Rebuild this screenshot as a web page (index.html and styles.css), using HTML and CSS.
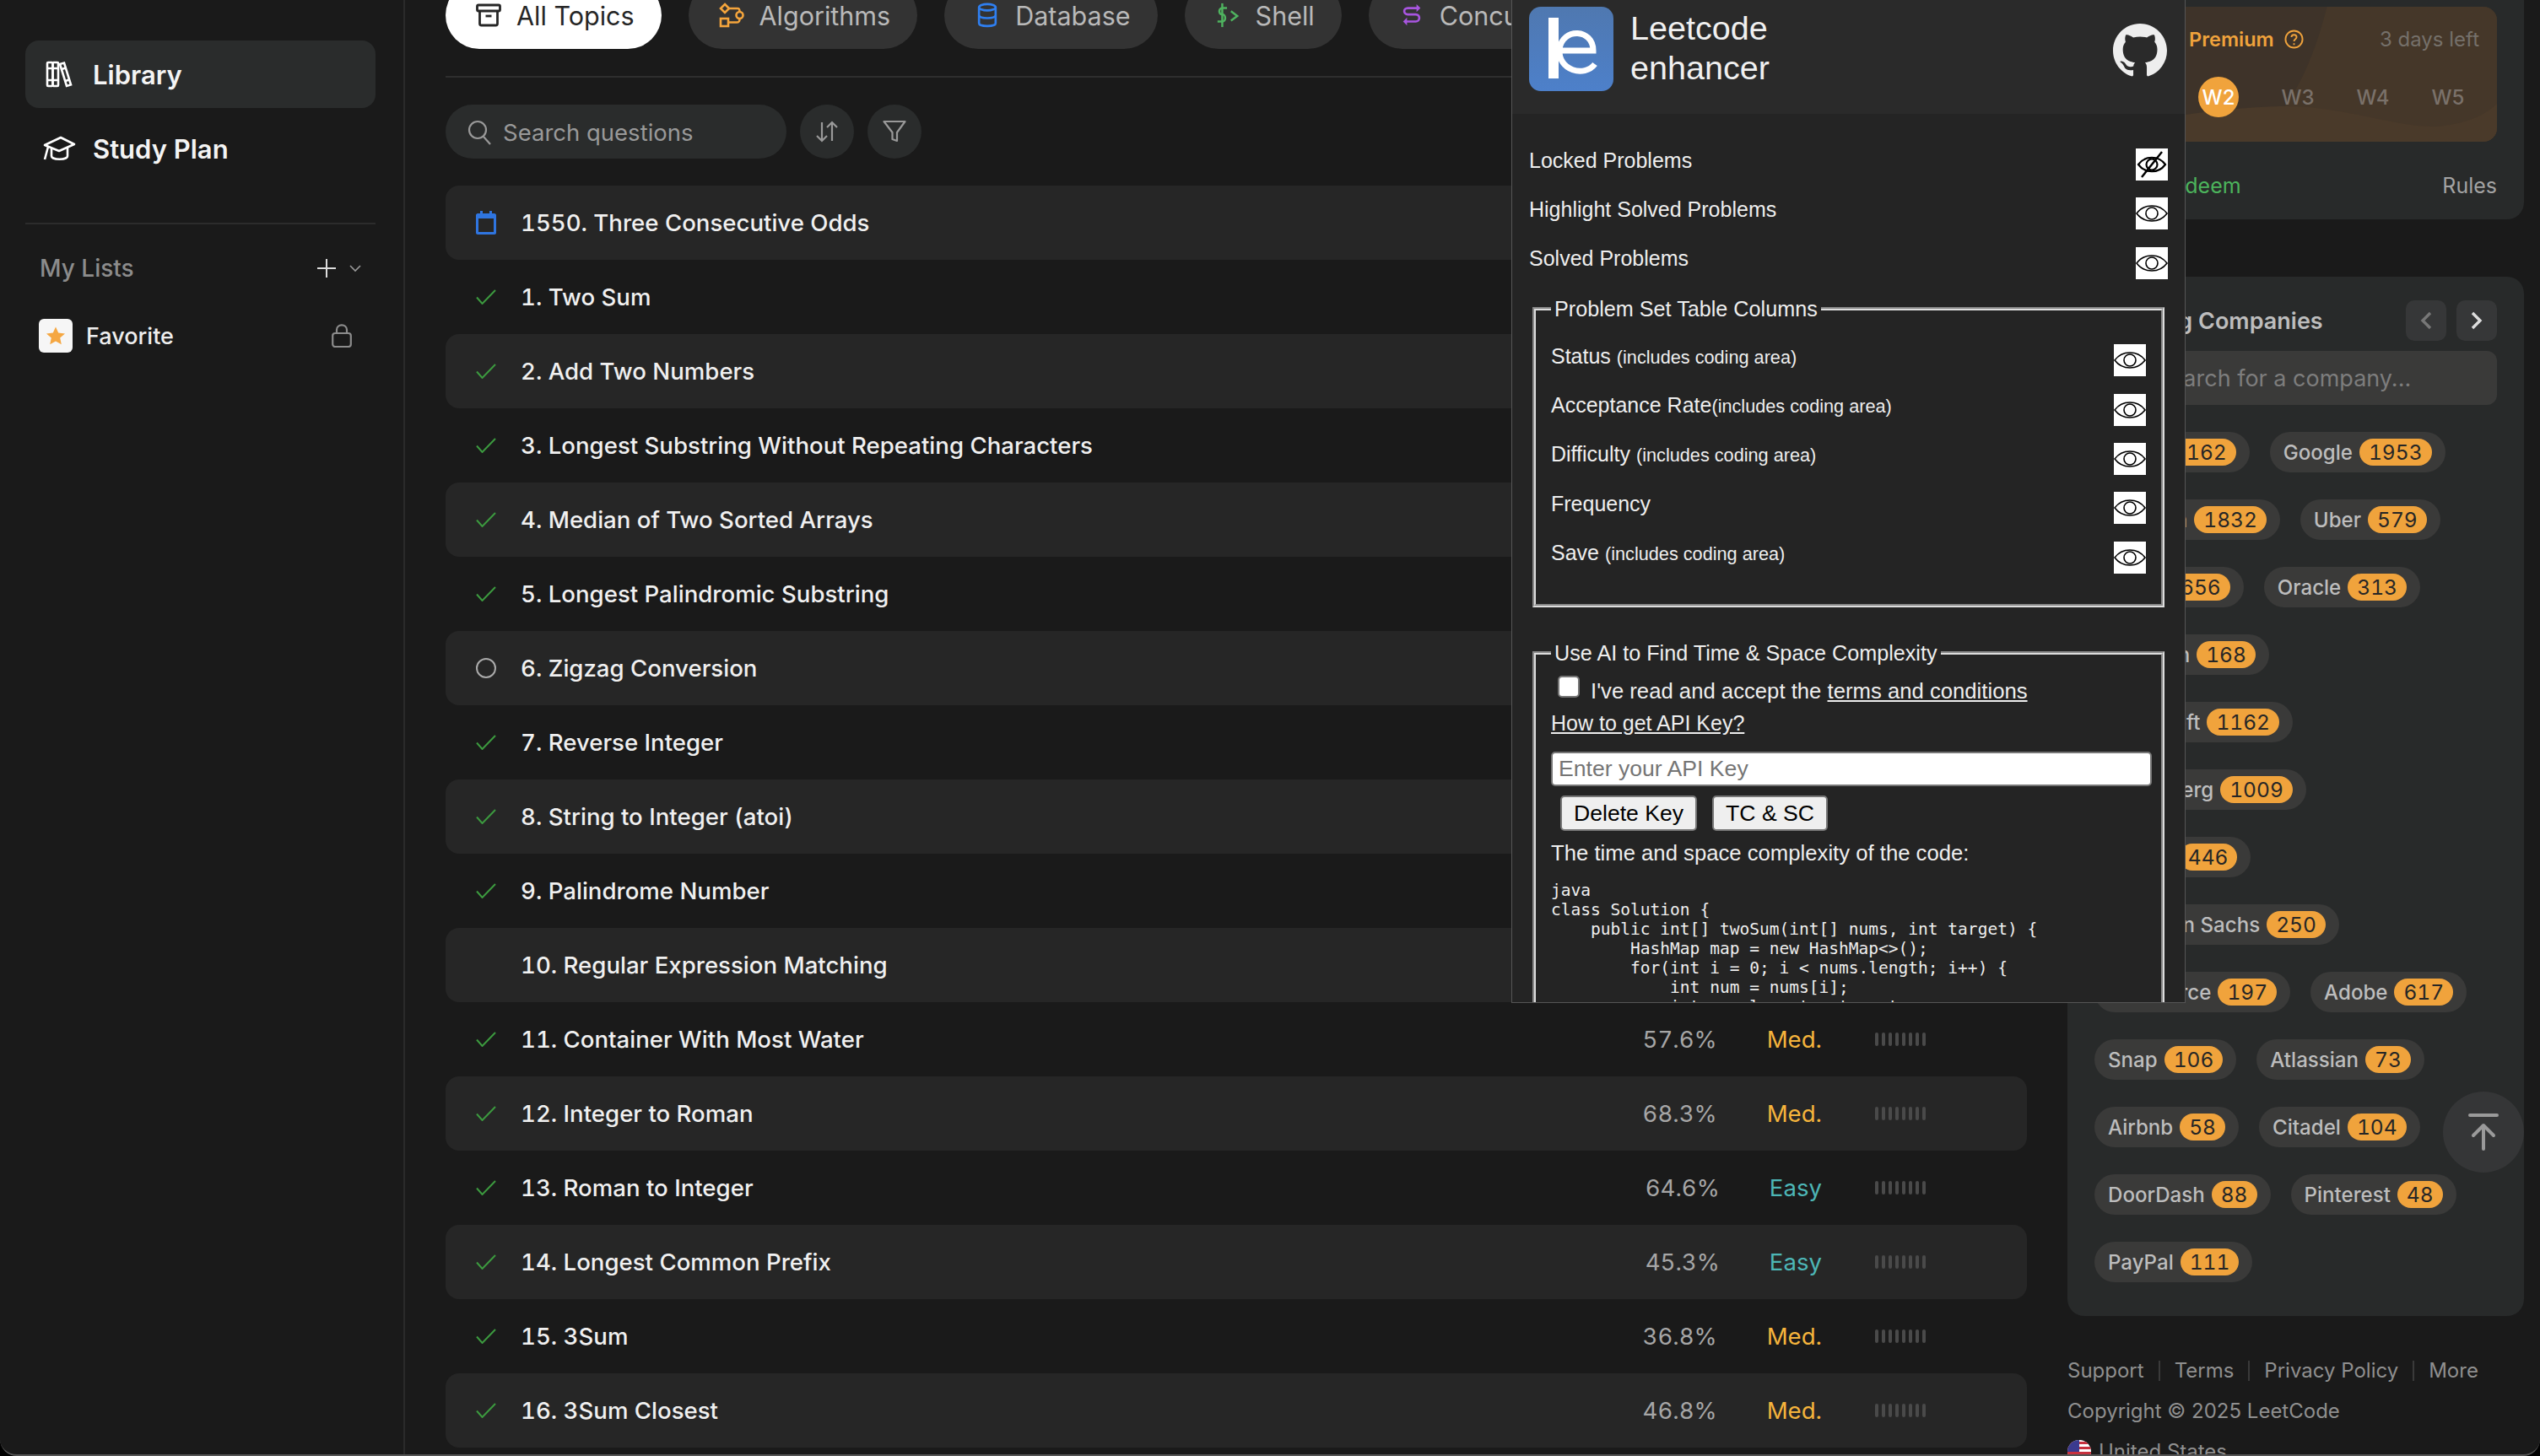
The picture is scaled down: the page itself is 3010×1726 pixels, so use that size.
FILE: index.html
```html
<!DOCTYPE html>
<html lang="en">
<head>
  <meta charset="UTF-8" />
  <title>Problem List - LeetCode</title>
  <link rel="stylesheet" href="styles.css">
</head>
<body>

<svg class="defs" width="0" height="0">
  <symbol id="i-check" viewBox="0 0 24 18">
    <path d="M1 9.5 L7.5 17 L23 1" fill="none" stroke="#3c9a3f" stroke-width="2"/>
  </symbol>
  <symbol id="i-eye" viewBox="0 0 38 38">
    <path d="M1 19 C10 7 28 7 37 19 C28 31 10 31 1 19 Z" fill="none" stroke="#000" stroke-width="1.6"/>
    <circle cx="19" cy="19" r="7" fill="none" stroke="#000" stroke-width="1.6"/>
  </symbol>
  <symbol id="i-eye-off" viewBox="0 0 38 38">
    <path d="M3 19 C11 8 27 8 35 19 C27 30 11 30 3 19 Z" fill="none" stroke="#000" stroke-width="2.2"/>
    <circle cx="19" cy="19" r="6.5" fill="none" stroke="#000" stroke-width="2.2"/>
    <path d="M31 4 L7 34" stroke="#000" stroke-width="2.4"/>
  </symbol>
</svg>

<div class="window">

  <!-- Sidebar -->
  <aside class="sidebar">
    <a class="nav-item active">
      <svg class="nav-icon" viewBox="0 0 32 32" fill="none" stroke="#fff" stroke-width="2.6">
        <rect x="2" y="2" width="6.5" height="28" rx="1"/>
        <rect x="8.5" y="2" width="6.5" height="28" rx="1"/>
        <path d="M17 4 L22 2.5 L30 28.5 L25 30 Z"/>
        <path d="M2 9 H15 M2 23 H15 M19 10 L24 8.5 M23.5 24 L28 22.5"/>
      </svg>
      Library
    </a>
    <a class="nav-item">
      <svg class="nav-icon wide" viewBox="0 0 40 30" fill="none" stroke="#fff" stroke-width="2.6" stroke-linejoin="round">
        <path d="M22 2 L38 10 L20 18 L3 11 Z"/>
        <path d="M11 15 V24 C11 29 30 29 30 24 V14"/>
        <path d="M7 13 L3 28"/>
      </svg>
      Study Plan
    </a>
    <div class="side-divider"></div>
    <div class="lists-head">
      <span>My Lists</span>
      <svg class="plus" viewBox="0 0 24 24" stroke="#ddd" stroke-width="2"><path d="M12 1 V23 M1 12 H23"/></svg>
      <svg class="chev" viewBox="0 0 14 10" fill="none" stroke="#999" stroke-width="1.6"><path d="M1 2 L7 8 L13 2"/></svg>
    </div>
    <div class="list-item">
      <span class="fav-icon">
        <svg viewBox="0 0 24 24"><path d="M12 1.5 L15.2 8.6 L23 9.4 L17.2 14.6 L18.8 22.3 L12 18.4 L5.2 22.3 L6.8 14.6 L1 9.4 L8.8 8.6 Z" fill="#f5a742"/></svg>
      </span>
      <span>Favorite</span>
      <svg class="lock" viewBox="0 0 24 28" fill="none" stroke="#8c8c8c" stroke-width="2.2">
        <rect x="1.2" y="11" width="21.6" height="16" rx="3"/>
        <path d="M6 11 V7 C6 -0.5 18 -0.5 18 7 V11"/>
      </svg>
    </div>
  </aside>

  <!-- Problem list -->
  <main class="content">
    <div class="topics">
      <div class="topic selected">
        <svg viewBox="0 0 30 28" fill="none" stroke="#262626" stroke-width="2.8" stroke-linejoin="round">
          <rect x="1.5" y="2" width="27" height="7" rx="1.5"/>
          <path d="M4.5 9 V24 C4.5 25.5 5.5 26 6.5 26 H23.5 C24.5 26 25.5 25.5 25.5 24 V9"/>
          <path d="M11.5 15 H18.5"/>
        </svg>
        All Topics
      </div>
      <div class="topic">
        <svg viewBox="0 0 30 30" fill="none" stroke="#f5a53c" stroke-width="2.6">
          <path d="M7 2 L12 7 L7 12 L2 7 Z"/>
          <path d="M12 7 H22 C24 7 24.5 8 24.5 11"/>
          <circle cx="24.5" cy="15" r="4"/>
          <path d="M24.5 19 C24.5 22 24 23.5 21 23.5 H11"/>
          <rect x="2" y="19" width="9" height="9"/>
        </svg>
        Algorithms
      </div>
      <div class="topic">
        <svg viewBox="0 0 26 32" fill="none" stroke="#2f7ff0" stroke-width="2.8">
          <ellipse cx="13" cy="6" rx="10.5" ry="4"/>
          <path d="M2.5 6 V26 C2.5 31 23.5 31 23.5 26 V6"/>
          <path d="M2.5 16 C2.5 21 23.5 21 23.5 16"/>
        </svg>
        Database
      </div>
      <div class="topic">
        <svg viewBox="0 0 30 32" fill="none" stroke="#4fb35f" stroke-width="2.6">
          <path d="M14 7 H8 C3 7 3 15 8 15 C13 15 13 24 8 24 H2"/>
          <path d="M8 1 V31"/>
          <path d="M19 11 L27 17 L19 23"/>
        </svg>
        Shell
      </div>
      <div class="topic">
        <svg viewBox="0 0 28 32" fill="none" stroke="#a855e0" stroke-width="2.8">
          <path d="M23 7 H9 C3 7 3 15 9 15 H19 C25 15 25 24 19 24 H5"/>
          <path d="M20 2 L25 7 L20 12 Z M8 19 L3 24 L8 29 Z" fill="#a855e0" stroke="none"/>
        </svg>
        Concurrency
      </div>
    </div>

    <div class="tools">
      <div class="search">
        <svg viewBox="0 0 28 30" fill="none" stroke="#999" stroke-width="2.2"><circle cx="12" cy="12" r="10"/><path d="M19 20 L27 29"/></svg>
        <span>Search questions</span>
      </div>
      <div class="round-btn">
        <svg viewBox="0 0 28 28" fill="none" stroke="#999" stroke-width="2.2"><path d="M8 3 V25 M2 19 L8 25 L14 19"/><path d="M20 25 V3 M14 9 L20 3 L26 9"/></svg>
      </div>
      <div class="round-btn">
        <svg viewBox="0 0 28 28" fill="none" stroke="#999" stroke-width="2.2" stroke-linejoin="round"><path d="M1.5 2 H26.5 L17 15 V25 L11.5 23 V15 Z"/></svg>
      </div>
    </div>

    <div class="rows">
      <div class="row">
        <svg class="st" viewBox="0 0 24 28"><path d="M5 0 H8 V3 H16 V0 H19 V3 H22 C23 3 24 4 24 5 V26 C24 27 23 28 22 28 H2 C1 28 0 27 0 26 V5 C0 4 1 3 2 3 H5 Z M3 9 V25 H21 V9 Z" fill="#2f75e0"/></svg>
        <span class="title">1550. Three Consecutive Odds</span>
      </div>
      <div class="row"><svg class="st check"><use href="#i-check"/></svg><span class="title">1. Two Sum</span></div>
      <div class="row"><svg class="st check"><use href="#i-check"/></svg><span class="title">2. Add Two Numbers</span></div>
      <div class="row"><svg class="st check"><use href="#i-check"/></svg><span class="title">3. Longest Substring Without Repeating Characters</span></div>
      <div class="row"><svg class="st check"><use href="#i-check"/></svg><span class="title">4. Median of Two Sorted Arrays</span></div>
      <div class="row"><svg class="st check"><use href="#i-check"/></svg><span class="title">5. Longest Palindromic Substring</span></div>
      <div class="row">
        <svg class="st" viewBox="0 0 24 24"><circle cx="12" cy="12" r="11" fill="none" stroke="#aaa" stroke-width="2"/></svg>
        <span class="title">6. Zigzag Conversion</span>
      </div>
      <div class="row"><svg class="st check"><use href="#i-check"/></svg><span class="title">7. Reverse Integer</span></div>
      <div class="row"><svg class="st check"><use href="#i-check"/></svg><span class="title">8. String to Integer (atoi)</span></div>
      <div class="row"><svg class="st check"><use href="#i-check"/></svg><span class="title">9. Palindrome Number</span></div>
      <div class="row"><span class="st"></span><span class="title">10. Regular Expression Matching</span></div>
      <div class="row">
        <svg class="st check"><use href="#i-check"/></svg><span class="title">11. Container With Most Water</span>
        <span class="acc">57.6%</span><span class="diff med">Med.</span>
        <span class="freq"><i></i><i></i><i></i><i></i><i></i><i></i><i></i><i></i></span>
      </div>
      <div class="row">
        <svg class="st check"><use href="#i-check"/></svg><span class="title">12. Integer to Roman</span>
        <span class="acc">68.3%</span><span class="diff med">Med.</span>
        <span class="freq"><i></i><i></i><i></i><i></i><i></i><i></i><i></i><i></i></span>
      </div>
      <div class="row">
        <svg class="st check"><use href="#i-check"/></svg><span class="title">13. Roman to Integer</span>
        <span class="acc">64.6%</span><span class="diff easy">Easy</span>
        <span class="freq"><i></i><i></i><i></i><i></i><i></i><i></i><i></i><i></i></span>
      </div>
      <div class="row">
        <svg class="st check"><use href="#i-check"/></svg><span class="title">14. Longest Common Prefix</span>
        <span class="acc">45.3%</span><span class="diff easy">Easy</span>
        <span class="freq"><i></i><i></i><i></i><i></i><i></i><i></i><i></i><i></i></span>
      </div>
      <div class="row">
        <svg class="st check"><use href="#i-check"/></svg><span class="title">15. 3Sum</span>
        <span class="acc">36.8%</span><span class="diff med">Med.</span>
        <span class="freq"><i></i><i></i><i></i><i></i><i></i><i></i><i></i><i></i></span>
      </div>
      <div class="row">
        <svg class="st check"><use href="#i-check"/></svg><span class="title">16. 3Sum Closest</span>
        <span class="acc">46.8%</span><span class="diff med">Med.</span>
        <span class="freq"><i></i><i></i><i></i><i></i><i></i><i></i><i></i><i></i></span>
      </div>
    </div>
  </main>

  <!-- Right column -->
  <section class="side-col">
    <div class="card weekly">
      <div class="weekly-box">
        <svg class="waves" viewBox="0 0 476 160" preserveAspectRatio="none">
          <path d="M275 0 C260 60 240 100 220 125 L476 160 V0 Z" fill="#453729"/>
          <path d="M0 160 C60 130 150 120 220 118 C300 116 370 150 420 140 C450 135 465 125 476 115 V160 Z" fill="#4a3a2a"/>
        </svg>
        <div class="weekly-head">
          <span class="premium">Weekly Premium</span>
          <svg class="help" viewBox="0 0 24 24" fill="none" stroke="#f0a33c" stroke-width="2"><circle cx="12" cy="12" r="10.5"/><path d="M8.8 9.5 C8.8 5.5 15.2 5.5 15.2 9.5 C15.2 12 12 12 12 14.5 M12 17 V19"/></svg>
          <span class="days">3 days left</span>
        </div>
        <div class="weeks">
          <span class="week">W1</span>
          <span class="week now">W2</span>
          <span class="week">W3</span>
          <span class="week">W4</span>
          <span class="week">W5</span>
        </div>
      </div>
      <div class="weekly-foot">
        <span class="redeem">Redeem</span>
        <span class="rules">Rules</span>
      </div>
    </div>

    <div class="card companies">
      <div class="comp-head">
        <span class="comp-title">Trending Companies</span>
        <span class="arrow-btn"><svg viewBox="0 0 16 24" fill="none" stroke="#777" stroke-width="3.4"><path d="M13 3 L4 12 L13 21"/></svg></span>
        <span class="arrow-btn"><svg viewBox="0 0 16 24" fill="none" stroke="#ddd" stroke-width="3.4"><path d="M3 3 L12 12 L3 21"/></svg></span>
      </div>
      <div class="comp-search">Search for a company...</div>
      <div class="chips">
        <div class="chip-row">
          <span class="chip">Meta <b>1162</b></span>
          <span class="chip">Google <b>1953</b></span>
        </div>
        <div class="chip-row">
          <span class="chip">Amazon <b>1832</b></span>
          <span class="chip">Uber <b>579</b></span>
        </div>
        <div class="chip-row">
          <span class="chip">Apple <b>656</b></span>
          <span class="chip">Oracle <b>313</b></span>
        </div>
        <div class="chip-row"><span class="chip">LinkedIn <b>168</b></span></div>
        <div class="chip-row"><span class="chip">Microsoft <b>1162</b></span></div>
        <div class="chip-row"><span class="chip">Bloomberg <b>1009</b></span></div>
        <div class="chip-row"><span class="chip">TikTok <b>446</b></span></div>
        <div class="chip-row"><span class="chip">Goldman Sachs <b>250</b></span></div>
        <div class="chip-row">
          <span class="chip">Salesforce <b>197</b></span>
          <span class="chip">Adobe <b>617</b></span>
        </div>
        <div class="chip-row">
          <span class="chip">Snap <b>106</b></span>
          <span class="chip">Atlassian <b>73</b></span>
        </div>
        <div class="chip-row">
          <span class="chip">Airbnb <b>58</b></span>
          <span class="chip">Citadel <b>104</b></span>
        </div>
        <div class="chip-row">
          <span class="chip">DoorDash <b>88</b></span>
          <span class="chip">Pinterest <b>48</b></span>
        </div>
        <div class="chip-row"><span class="chip">PayPal <b>111</b></span></div>
      </div>
    </div>

    <footer class="foot">
      <div class="foot-links">
        <span>Support</span><i></i><span>Terms</span><i></i><span>Privacy Policy</span><i></i><span>More</span>
      </div>
      <div>Copyright © 2025 LeetCode</div>
      <div class="foot-region">
        <svg class="flag" viewBox="0 0 28 28">
          <rect width="28" height="28" fill="#fff"/>
          <path d="M0 2 H28 V5 H0 Z M0 8 H28 V11 H0 Z M0 14 H28 V17 H0 Z M0 20 H28 V23 H0 Z" fill="#c8313e"/>
          <rect width="14" height="14" fill="#3b3b8f"/>
        </svg>
        United States
      </div>
    </footer>
  </section>

  <div class="to-top">
    <svg viewBox="0 0 36 44" fill="none" stroke="#9a9a9a" stroke-width="4" stroke-linecap="round" stroke-linejoin="round">
      <path d="M2 2 H34"/><path d="M18 42 V14 M6 26 L18 14 L30 26"/>
    </svg>
  </div>

  <!-- Extension popup -->
  <div class="popup">
    <div class="pop-head">
      <svg class="pop-logo" viewBox="0 0 100 100">
        <defs>
          <linearGradient id="logo-bg" x1="0" y1="0" x2="0" y2="1">
            <stop offset="0" stop-color="#4f78b0"/>
            <stop offset="1" stop-color="#4d80ca"/>
          </linearGradient>
        </defs>
        <rect width="100" height="100" rx="14" fill="url(#logo-bg)"/>
        <rect x="23" y="13" width="12" height="72" fill="#fff"/>
        <path d="M36 52 H76 C76 26 40 24 36 50 C34 76 66 84 78 68" fill="none" stroke="#fff" stroke-width="7"/>
      </svg>
      <div class="pop-name">Leetcode<br>enhancer</div>
      <svg class="pop-git" viewBox="0 0 16 16"><path fill="#eee" d="M8 0C3.58 0 0 3.58 0 8c0 3.54 2.29 6.53 5.47 7.59.4.07.55-.17.55-.38 0-.19-.01-.82-.01-1.49-2.01.37-2.53-.49-2.69-.94-.09-.23-.48-.94-.82-1.13-.28-.15-.68-.52-.01-.53.63-.01 1.08.58 1.23.82.72 1.21 1.87.87 2.33.66.07-.52.28-.87.51-1.07-1.78-.2-3.64-.89-3.64-3.95 0-.87.31-1.59.82-2.15-.08-.2-.36-1.02.08-2.12 0 0 .67-.21 2.2.82.64-.18 1.32-.27 2-.27.68 0 1.36.09 2 .27 1.53-1.04 2.2-.82 2.2-.82.44 1.1.16 1.92.08 2.12.51.56.82 1.27.82 2.15 0 3.07-1.87 3.75-3.65 3.95.29.25.54.73.54 1.48 0 1.07-.01 1.93-.01 2.2 0 .21.15.46.55.38A8.013 8.013 0 0016 8c0-4.42-3.58-8-8-8z"/></svg>
    </div>

    <div class="pop-body">
      <div class="toggle"><span>Locked Problems</span><svg class="eye"><use href="#i-eye-off"/></svg></div>
      <div class="toggle"><span>Highlight Solved Problems</span><svg class="eye"><use href="#i-eye"/></svg></div>
      <div class="toggle"><span>Solved Problems</span><svg class="eye"><use href="#i-eye"/></svg></div>

      <fieldset class="box columns">
        <legend>Problem Set Table Columns</legend>
        <div class="toggle"><span>Status <small>(includes coding area)</small></span><svg class="eye"><use href="#i-eye"/></svg></div>
        <div class="toggle"><span>Acceptance Rate<small>(includes coding area)</small></span><svg class="eye"><use href="#i-eye"/></svg></div>
        <div class="toggle"><span>Difficulty <small>(includes coding area)</small></span><svg class="eye"><use href="#i-eye"/></svg></div>
        <div class="toggle"><span>Frequency</span><svg class="eye"><use href="#i-eye"/></svg></div>
        <div class="toggle"><span>Save <small>(includes coding area)</small></span><svg class="eye"><use href="#i-eye"/></svg></div>
      </fieldset>

      <fieldset class="box ai">
        <legend>Use AI to Find Time &amp; Space Complexity</legend>
        <div class="terms">
          <input type="checkbox" class="tick">
          <span>I've read and accept the <a>terms and conditions</a></span>
        </div>
        <a class="howto">How to get API Key?</a>
        <input class="api-key" type="text" placeholder="Enter your API Key">
        <div class="ai-btns">
          <button class="plain-btn">Delete Key</button>
          <button class="plain-btn">TC &amp; SC</button>
        </div>
        <p class="ai-note">The time and space complexity of the code:</p>
<pre class="code">java
class Solution {
    public int[] twoSum(int[] nums, int target) {
        HashMap map = new HashMap&lt;&gt;();
        for(int i = 0; i &lt; nums.length; i++) {
            int num = nums[i];
            int complement = target - num;</pre>
      </fieldset>
    </div>
  </div>

</div>

</body>
</html>
```

FILE: styles.css
```css
* { box-sizing: border-box; margin: 0; padding: 0; }
html, body { background: #000; }
body { font-family: Inter, "Noto Sans", sans-serif; color: #eee; }

.defs { position: absolute; }

.window {
  position: relative;
  display: flex;
  height: 1726px;
  overflow: hidden;
  background: #1a1a1a;
  border-bottom: 2px solid #555;
  border-radius: 0 0 20px 20px;
}

/* Sidebar */
.sidebar {
  flex: 0 0 480px;
  padding: 48px 33px 0 30px;
  border-right: 2px solid #2a2a2a;
}

.nav-item {
  display: flex;
  align-items: center;
  gap: 24px;
  height: 80px;
  margin-bottom: 8px;
  padding-left: 24px;
  border-radius: 16px;
  font-size: 31px;
  font-weight: 600;
  color: #f4f4f4;
}
.nav-item.active { background: #2a2c2c; }
.nav-icon { width: 32px; height: 32px; flex: none; }
.nav-icon.wide { width: 40px; height: 30px; margin: 0 -4px; }

.side-divider { margin-top: 48px; border-top: 2px solid #2c2c2c; }

.lists-head {
  display: flex;
  align-items: center;
  height: 40px;
  margin-top: 32px;
  padding: 0 0 0 17px;
  font-size: 28px;
  font-weight: 500;
  color: #8c8c8c;
}
.lists-head span { flex: 1; }
.plus { width: 24px; height: 24px; }
.chev { width: 14px; height: 10px; margin: 0 17px 0 15px; }

.list-item {
  display: flex;
  align-items: center;
  gap: 16px;
  height: 40px;
  margin-top: 40px;
  padding-left: 16px;
  font-size: 27px;
  font-weight: 500;
  color: #eee;
}
.list-item > span:nth-child(2) { flex: 1; }
.fav-icon {
  display: flex;
  align-items: center;
  justify-content: center;
  width: 40px;
  height: 40px;
  background: #f6f6f6;
  border-radius: 6px;
}
.fav-icon svg { width: 24px; height: 24px; }
.lock { width: 24px; height: 28px; margin-right: 28px; }

/* Problem list */
.content {
  flex: 0 0 1922px;
  padding-left: 48px;
  min-width: 0;
}

.topics {
  display: flex;
  gap: 32px;
  margin-top: -22px;
  padding-bottom: 32px;
  border-bottom: 2px solid #2e2e2e;
  overflow: hidden;
}
.topic {
  display: flex;
  align-items: center;
  flex: none;
  gap: 18px;
  height: 80px;
  padding: 0 32px 0 36px;
  background: #333;
  border-radius: 40px;
  font-size: 30.5px;
  color: #b9b9b9;
}
.topic.selected { background: #fff; color: #262626; }
.topic svg { width: 30px; height: 30px; flex: none; }

.tools { display: flex; gap: 16px; margin-top: 32px; }
.search {
  display: flex;
  align-items: center;
  gap: 14px;
  width: 404px;
  height: 64px;
  padding-left: 26px;
  padding-top: 1px;
  background: #2a2c2c;
  border-radius: 32px;
  font-size: 27.5px;
  color: #999;
}
.search svg { width: 28px; height: 30px; }
.round-btn {
  display: flex;
  align-items: center;
  justify-content: center;
  width: 64px;
  height: 64px;
  background: #2a2c2c;
  border-radius: 50%;
}
.round-btn svg { width: 28px; height: 28px; }

.rows { margin-top: 32px; }
.row {
  display: flex;
  align-items: center;
  height: 88px;
  padding: 0 120px 0 36px;
  border-radius: 16px;
  font-size: 27.6px;
  font-variant-numeric: tabular-nums;
}
.row:nth-child(odd) { background: #262626; }
.st { flex: none; width: 24px; height: 28px; margin-right: 29px; }
.st.check { height: 18px; }
.title { font-weight: 500; color: #f0f0f0; }
.acc { margin-left: auto; color: #a6a6a6; }
.diff { margin-left: 59px; }
.med { color: #f5b43c; }
.easy { color: #4db6b6; }
.freq { display: flex; gap: 4px; margin-left: 63px; }
.freq i { width: 4px; height: 16px; background: #4a4a4a; border-radius: 2px; }

/* Right column */
.side-col { flex: 0 0 540px; margin-left: 48px; }

.card {
  background: #282a2a;
  border-radius: 20px;
  padding: 0 32px;
}

.weekly { margin-top: -24px; padding-top: 32px; height: 284px; }
.weekly-box {
  position: relative;
  height: 160px;
  padding: 0 34px;
  background: #3e3329;
  border-radius: 16px;
  overflow: hidden;
}
.waves { position: absolute; top: 0; left: 0; width: 100%; height: 100%; }
.weekly-head {
  position: relative;
  display: flex;
  align-items: center;
  height: 76px;
  font-size: 24px;
}
.premium { margin-left: -12px; font-size: 23.5px; font-weight: 600; color: #f0a33c; white-space: nowrap; }
.help { width: 23px; height: 23px; margin-left: 12px; }
.days { margin-left: auto; margin-right: -13px; color: #75706a; }
.weeks {
  position: relative;
  display: flex;
  gap: 41px;
  margin-top: 7px;
}
.week {
  display: flex;
  align-items: center;
  justify-content: center;
  flex: none;
  width: 48px;
  height: 48px;
  border-radius: 50%;
  font-size: 24px;
  font-weight: 500;
  color: #7a716a;
}
.week.now { margin-right: 5px; background: #f0a33c; color: #fff; }

.weekly-foot {
  display: flex;
  justify-content: space-between;
  align-items: center;
  height: 104px;
  font-size: 25px;
}
.redeem { margin-left: 77px; color: #4cb45c; }
.rules { color: #a3a3a3; }

.companies { margin-top: 68px; padding-top: 28px; padding-bottom: 40px; }
.comp-head { display: flex; align-items: center; gap: 12px; }
.comp-title { flex: 1; font-size: 27px; font-weight: 600; color: #bdbdbd; }
.arrow-btn {
  display: flex;
  align-items: center;
  justify-content: center;
  width: 48px;
  height: 48px;
  background: #363738;
  border-radius: 10px;
}
.arrow-btn svg { width: 16px; height: 24px; }

.comp-search {
  display: flex;
  align-items: center;
  height: 64px;
  margin-top: 12px;
  padding-left: 72px;
  background: #3a3a39;
  border-radius: 12px;
  font-size: 27px;
  color: #7d7d7d;
}

.chips { display: flex; flex-direction: column; gap: 32px; margin-top: 32px; }
.chip-row { display: flex; gap: 24px; }
.chip {
  display: flex;
  align-items: center;
  gap: 8px;
  height: 48px;
  padding: 0 16px;
  background: #3a3a39;
  border-radius: 24px;
  font-size: 24.1px;
  font-weight: 500;
  color: #bdbdbd;
  white-space: nowrap;
}
.chip b {
  padding: 0 11px;
  height: 32px;
  line-height: 32px;
  background: #f0a33c;
  border-radius: 16px;
  font-size: 24.5px;
  font-weight: 400;
  font-variant-numeric: tabular-nums;
  color: #262626;
}

.foot { margin-top: 41px; font-size: 24px; line-height: 48px; color: #8f8f8f; }
.foot-links { display: flex; align-items: center; gap: 17px; }
.foot-links i { width: 2px; height: 24px; background: #3a3a3a; }
.foot-region { display: flex; align-items: center; gap: 9px; }
.flag { width: 28px; height: 28px; border-radius: 50%; }

.to-top {
  position: absolute;
  top: 1294px;
  left: 2895px;
  display: flex;
  align-items: center;
  justify-content: center;
  width: 96px;
  height: 96px;
  background: #353637;
  border-radius: 50%;
}
.to-top svg { width: 36px; height: 44px; }

/* Extension popup */
.popup {
  position: absolute;
  top: 0;
  left: 1791px;
  width: 799px;
  height: 1189px;
  overflow: hidden;
  background: #242424;
  border: 1px solid #555;
  border-top: none;
  font-family: "Liberation Sans", Arial, sans-serif;
  font-size: 25px;
  font-variant-ligatures: none;
  color: #eee;
}

.pop-head {
  display: flex;
  height: 135px;
  padding: 8px 21px 0 20px;
  background: #2a2a2a;
}
.pop-logo { width: 100px; height: 100px; flex: none; }
.pop-name { margin: 2px 0 0 20px; font-size: 39.6px; line-height: 47px; color: #f0f0f0; }
.pop-git { width: 64px; height: 64px; margin: 20px 0 0 auto; }

.pop-body { padding: 41px 20px 0 20px; }

.toggle {
  display: flex;
  justify-content: space-between;
  align-items: center;
  height: 38px;
  margin-bottom: 20.4px;
}
.toggle > span { padding-bottom: 10px; white-space: nowrap; }
.toggle small { font-size: 21.7px; }
.eye { width: 38px; height: 38px; flex: none; background: #fff; }

.box {
  min-width: 0;
  margin: 0 4px;
  padding: 0 18px;
  border: 4px groove #ddd;
}
.box legend { padding: 0 4px; font-size: 25.2px; line-height: 30px; }

.columns { height: 369px; padding-top: 27px; }
.ai { margin-top: 39px; padding: 12px 10px 0 18px; }

.terms { display: flex; align-items: flex-start; gap: 13px; height: 37px; font-size: 25.7px; }
.terms span { padding-top: 4px; white-space: nowrap; }
.tick {
  appearance: none;
  width: 26px;
  height: 26px;
  margin-left: 8px;
  background: #fff;
  border: 2px solid #767676;
  border-radius: 5px;
}
.terms a, .howto { color: #eee; text-decoration: underline; }

.howto { display: block; height: 29px; margin-top: 5px; line-height: 29px; }

.api-key {
  display: block;
  width: 712px;
  height: 41px;
  margin-top: 19px;
  padding: 0 7px;
  background: #fff;
  border: 2px solid #767676;
  border-radius: 5px;
  font-family: "Liberation Sans", Arial, sans-serif;
  font-size: 26.6px;
}
.api-key::placeholder { color: #757575; }

.ai-btns { display: flex; gap: 18px; margin: 11px 0 0 11px; }
.plain-btn {
  height: 42px;
  padding: 0 14px;
  background: #efefef;
  border: 2px solid #767676;
  border-radius: 5px;
  font-family: "Liberation Sans", Arial, sans-serif;
  font-size: 26.6px;
  color: #000;
}

.ai-note { margin-top: 12px; font-size: 25.7px; line-height: 29px; }

.code {
  margin-top: 18px;
  font-family: "DejaVu Sans Mono", monospace;
  font-size: 19.55px;
  line-height: 23px;
  color: #eee;
}
```
